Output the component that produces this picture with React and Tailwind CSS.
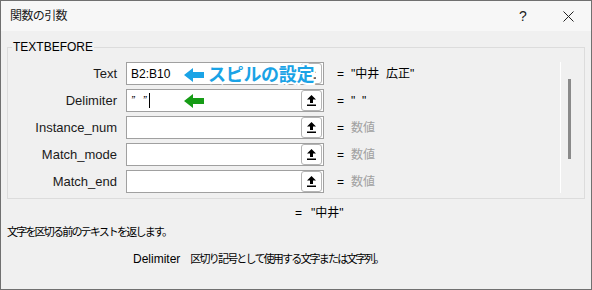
import React from 'react'

const rows = [
  { label: 'Text', value: '"中井  広正"', muted: false },
  { label: 'Delimiter', value: '"  "', muted: false },
  { label: 'Instance_num', value: '数値', muted: true },
  { label: 'Match_mode', value: '数値', muted: true },
  { label: 'Match_end', value: '数値', muted: true },
]

function RefButton() {
  return (
    <div className="w-[21px] h-[21px] rounded-[3px] border border-[#b4b4b4] bg-white flex items-center justify-center">
      <svg width="9" height="11" viewBox="0 0 9 11">
        <polygon points="4.5,0 9,4.5 6,4.5 6,8 3,8 3,4.5 0,4.5" fill="#000" />
        <rect x="0" y="9.5" width="9" height="1.5" fill="#000" />
      </svg>
    </div>
  )
}

function LeftArrow({ color }) {
  return (
    <svg width="20" height="14" viewBox="0 0 20 14">
      <polygon points="0,7 9,0 9,4 20,4 20,10 9,10 9,14" fill={color} />
    </svg>
  )
}

export default function App() {
  return (
    <div className="w-[592px] h-[290px] border border-[#707070] bg-[#f0f0f0] flex flex-col text-black font-['Liberation_Sans','Noto_Sans_CJK_JP',sans-serif] overflow-hidden">
      {/* Title bar */}
      <div className="h-[30px] bg-[#f7f7f7] flex items-center">
        <span className="pl-[9px] text-[12px] tracking-[-0.6px] text-[#1a1a1a]">関数の引数</span>
        <div className="ml-auto flex h-full">
          <div className="w-[44px] flex items-center justify-center text-[14px] text-[#222]">?</div>
          <div className="w-[46px] flex items-center justify-center">
            <svg width="11" height="11" viewBox="0 0 11 11">
              <path d="M0.5 0.5 L10.5 10.5 M10.5 0.5 L0.5 10.5" stroke="#222" strokeWidth="1" />
            </svg>
          </div>
        </div>
      </div>

      <div className="px-[6px]">
        <fieldset className="mt-[9px] border border-[#dcdcdc] px-0 pt-[8px] pb-[5px]">
          <legend className="ml-[4px] px-[1px] text-[12px] leading-[14px]">TEXTBEFORE</legend>
          <div className="flex">
            <div className="flex-1 flex flex-col gap-[4px]">
              {rows.map((r, i) => (
                <div key={r.label} className="flex items-center h-[23px]">
                  <div className="w-[109px] mr-[9px] text-right text-[13px] text-[#1a1a1a]">{r.label}</div>
                  <div className="relative w-[198px] h-[23px] border border-[#a0a0a0] bg-white flex items-center pl-[4px] pr-[1px]">
                    <div className="flex-1 flex items-center text-[12px]">
                      {i === 0 && <span>B2:B10</span>}
                      {i === 1 && (
                        <>
                          <span className="text-[11px] italic">”</span>
                          <span className="ml-[8px] text-[11px] italic">”</span>
                          <span className="ml-[3px] w-[1px] h-[15px] bg-black" />
                        </>
                      )}
                    </div>
                    <RefButton />
                    {i === 0 && (
                      <div className="absolute left-[57px] top-[3px] flex items-center gap-[4px]">
                        <LeftArrow color="#1aa3e6" />
                        <span className="text-[18px] leading-[18px] font-bold text-[#1aa3e6] tracking-[-0.3px] [-webkit-text-stroke:4px_white] [paint-order:stroke_fill]">スピルの設定</span>
                      </div>
                    )}
                    {i === 1 && (
                      <div className="absolute left-[57px] top-[4px]">
                        <LeftArrow color="#169c16" />
                      </div>
                    )}
                  </div>
                  <span className="ml-[13px] text-[12px]">=</span>
                  <span className={`ml-[7px] text-[12px] whitespace-pre ${r.muted ? 'text-[#a0a0a0]' : 'text-black'}`}>{r.value}</span>
                </div>
              ))}
            </div>
            <div className="w-[24px] border-l border-white">
              <div className="ml-[7px] mt-[17px] w-[3px] h-[80px] bg-[#8a8a8a]" />
            </div>
          </div>
        </fieldset>

        <div className="mt-[6px] pl-[288px] h-[16px] flex items-center text-[12px]">
          <span>=</span>
          <span className="ml-[9px]">"中井"</span>
        </div>
        <div className="mt-[3px] h-[16px] flex items-center text-[11px] tracking-[-1.8px]">
          文字を区切る前のテキストを返します。
        </div>
        <div className="mt-[11px] pl-[126px] h-[16px] flex items-center">
          <span className="text-[12px]">Delimiter</span>
          <span className="ml-[10px] text-[11px] tracking-[-1.8px]">区切り記号として使用する文字または文字列。</span>
        </div>
      </div>
    </div>
  )
}
